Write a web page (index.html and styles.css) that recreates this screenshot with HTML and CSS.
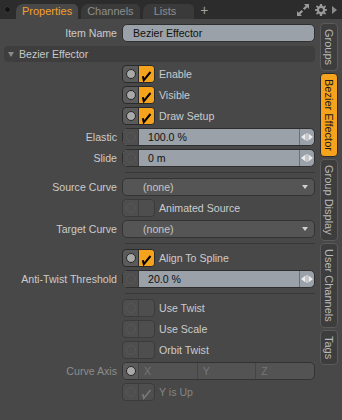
FILE: index.html
```html
<!DOCTYPE html>
<html lang="en">
<head>
    <meta charset="UTF-8">
    <meta name="viewport" content="width=device-width, initial-scale=1.0">
    <title>Bezier Effector Properties</title>
    <link rel="stylesheet" href="styles.css">
</head>
<body>
    <div class="topbar">
        <span class="dot"></span>
        <div class="tab active">Properties</div>
        <div class="tab">Channels</div>
        <div class="tab lists">Lists</div>
        <span class="plus">+</span>
        <div class="tools">
            <svg width="14" height="14" viewBox="0 0 14 14">
                <path d="M8 1 H13 V6 L11.3 4.3 L8.5 7.1 L6.9 5.5 L9.7 2.7 Z" fill="#9a9a9a"/>
                <path d="M6 13 H1 V8 L2.7 9.7 L5.5 6.9 L7.1 8.5 L4.3 11.3 Z" fill="#9a9a9a"/>
            </svg>
            <svg width="12" height="12" viewBox="0 0 12 12">
                <path d="M5 0 H7 L7.3 1.8 L8.6 2.4 L10.1 1.3 L11 2.8 L9.7 4.1 L10 5 L12 5.2 V6.8 L10 7 L9.7 7.9 L11 9.2 L10.1 10.7 L8.6 9.6 L7.3 10.2 L7 12 H5 L4.7 10.2 L3.4 9.6 L1.9 10.7 L1 9.2 L2.3 7.9 L2 7 L0 6.8 V5.2 L2 5 L2.3 4.1 L1 2.8 L1.9 1.3 L3.4 2.4 L4.7 1.8 Z M6 4 A2 2 0 1 0 6 8 A2 2 0 1 0 6 4 Z" fill="#9a9a9a" fill-rule="evenodd"/>
            </svg>
            <svg width="5" height="8" viewBox="0 0 5 8">
                <path d="M0 0 L5 4 L0 8 Z" fill="#8a8a8a"/>
            </svg>
        </div>
    </div>

    <div class="main">
        <div class="panel">
            <div class="row">
                <span class="label">Item Name</span>
                <div class="text-field">Bezier Effector</div>
            </div>

            <div class="section"><span class="caret"></span>Bezier Effector</div>

            <div class="row">
                <span class="label"></span>
                <div class="check-row">
                    <span class="toggle on"><span class="knob"><i></i></span><span class="box"><svg viewBox="0 0 16 16"><path d="M3.8 10.2 L4.8 14.2 L11.5 6"/></svg></span></span>
                    Enable
                </div>
            </div>
            <div class="row">
                <span class="label"></span>
                <div class="check-row">
                    <span class="toggle on"><span class="knob"><i></i></span><span class="box"><svg viewBox="0 0 16 16"><path d="M3.8 10.2 L4.8 14.2 L11.5 6"/></svg></span></span>
                    Visible
                </div>
            </div>
            <div class="row">
                <span class="label"></span>
                <div class="check-row">
                    <span class="toggle on"><span class="knob"><i></i></span><span class="box"><svg viewBox="0 0 16 16"><path d="M3.8 10.2 L4.8 14.2 L11.5 6"/></svg></span></span>
                    Draw Setup
                </div>
            </div>
            <div class="row">
                <span class="label">Elastic</span>
                <div class="num-field">
                    <span class="knob"><i></i></span>
                    <span class="value">100.0 %</span>
                    <span class="spin"><svg width="12" height="10" viewBox="0 0 12 10"><path d="M0 5 L4.5 1.5 V8.5 Z M7.5 1.5 L12 5 L7.5 8.5 Z" fill="#ececec"/><rect x="5.5" y="1" width="1" height="8" fill="#ececec"/></svg></span>
                </div>
            </div>
            <div class="row">
                <span class="label">Slide</span>
                <div class="num-field">
                    <span class="knob"><i></i></span>
                    <span class="value">0 m</span>
                    <span class="spin"><svg width="12" height="10" viewBox="0 0 12 10"><path d="M0 5 L4.5 1.5 V8.5 Z M7.5 1.5 L12 5 L7.5 8.5 Z" fill="#ececec"/><rect x="5.5" y="1" width="1" height="8" fill="#ececec"/></svg></span>
                </div>
            </div>

            <div class="sep"></div>

            <div class="row">
                <span class="label">Source Curve</span>
                <div class="dropdown">(none)<span class="arrow"></span></div>
            </div>
            <div class="row">
                <span class="label"></span>
                <div class="check-row">
                    <span class="toggle"><span class="knob"><i></i></span><span class="box"></span></span>
                    Animated Source
                </div>
            </div>
            <div class="row">
                <span class="label">Target Curve</span>
                <div class="dropdown">(none)<span class="arrow"></span></div>
            </div>

            <div class="sep"></div>

            <div class="row">
                <span class="label"></span>
                <div class="check-row">
                    <span class="toggle on"><span class="knob"><i></i></span><span class="box"><svg viewBox="0 0 16 16"><path d="M3.8 10.2 L4.8 14.2 L11.5 6"/></svg></span></span>
                    Align To Spline
                </div>
            </div>
            <div class="row">
                <span class="label">Anti-Twist Threshold</span>
                <div class="num-field">
                    <span class="knob"><i></i></span>
                    <span class="value">20.0 %</span>
                    <span class="spin"><svg width="12" height="10" viewBox="0 0 12 10"><path d="M0 5 L4.5 1.5 V8.5 Z M7.5 1.5 L12 5 L7.5 8.5 Z" fill="#ececec"/><rect x="5.5" y="1" width="1" height="8" fill="#ececec"/></svg></span>
                </div>
            </div>

            <div class="sep"></div>

            <div class="row">
                <span class="label"></span>
                <div class="check-row">
                    <span class="toggle"><span class="knob"><i></i></span><span class="box"></span></span>
                    Use Twist
                </div>
            </div>
            <div class="row">
                <span class="label"></span>
                <div class="check-row">
                    <span class="toggle"><span class="knob"><i></i></span><span class="box"></span></span>
                    Use Scale
                </div>
            </div>
            <div class="row">
                <span class="label"></span>
                <div class="check-row">
                    <span class="toggle"><span class="knob"><i></i></span><span class="box"></span></span>
                    Orbit Twist
                </div>
            </div>
            <div class="row">
                <span class="label dim">Curve Axis</span>
                <div class="axis">
                    <span class="knob lit"><i></i></span>
                    <span class="seg">X</span>
                    <span class="seg">Y</span>
                    <span class="seg">Z</span>
                </div>
            </div>
            <div class="row">
                <span class="label"></span>
                <div class="check-row dim">
                    <span class="toggle off"><span class="knob"><i></i></span><span class="box"><svg viewBox="0 0 16 16"><path d="M3.8 10.2 L4.8 14.2 L11.5 6"/></svg></span></span>
                    Y is Up
                </div>
            </div>
        </div>

        <div class="side">
            <div class="vtab">Groups</div>
            <div class="vtab active">Bezier Effector</div>
            <div class="vtab">Group Display</div>
            <div class="vtab">User Channels</div>
            <div class="vtab">Tags</div>
        </div>
    </div>
</body>
</html>
```

FILE: styles.css
```css
body {
    margin: 0;
    width: 342px;
    height: 420px;
    overflow: hidden;
    background: #484848;
    font-family: "Liberation Sans", Arial, sans-serif;
    font-size: 10.6px;
    color: #cbcbcb;
}

/* top tab strip */
.topbar {
    height: 19px;
    background: #2c2c2c;
    display: flex;
    align-items: flex-end;
    border-bottom: 1px solid #484848;
}
.dot {
    width: 5px;
    height: 5px;
    border-radius: 50%;
    background: #121212;
    border: 1px solid #3b3b3b;
    margin: 0 5px 0 4px;
    align-self: center;
}
.tab {
    height: 15px;
    line-height: 15px;
    padding: 0 6px;
    margin-right: 3px;
    background: #3a3a3a;
    color: #8e8e8e;
    border-radius: 7px 5px 0 0;
    font-size: 11px;
}
.tab.active {
    background: #484848;
    color: #f2a12a;
}
.tab.lists {
    padding: 0 18px 0 11px;
}
.plus {
    color: #a0a0a0;
    font-size: 14px;
    line-height: 17px;
    margin-left: 3px;
}
.tools {
    margin-left: auto;
    align-self: center;
    display: flex;
    align-items: center;
    gap: 5px;
    padding-right: 5px;
}

.main {
    display: flex;
}

/* properties form */
.panel {
    width: 311px;
    padding: 4px 3px 0 4px;
    display: flex;
    flex-direction: column;
    gap: 3px;
}
.row {
    display: grid;
    grid-template-columns: 113px 193px;
    column-gap: 5px;
    height: 18px;
    align-items: center;
}
.label {
    text-align: right;
    white-space: nowrap;
}
.label.dim {
    color: #8d8d8d;
}

.text-field {
    height: 18px;
    line-height: 16px;
    box-sizing: border-box;
    background: #9ba1a8;
    border: 1px solid #2f2f2f;
    border-radius: 5px;
    color: #111;
    padding-left: 10px;
}

.section {
    height: 16px;
    line-height: 16px;
    margin-top: 1px;
    background: #3e3e3e;
    border-radius: 4px;
    display: flex;
    align-items: center;
    color: #c8c8c8;
    padding-left: 4px;
}
.caret {
    width: 0;
    height: 0;
    border-left: 3.5px solid transparent;
    border-right: 3.5px solid transparent;
    border-top: 5px solid #8a8a8a;
    margin-right: 5px;
}

.check-row {
    display: flex;
    align-items: center;
    gap: 4px;
    white-space: nowrap;
}
.check-row.dim {
    color: #858585;
}
.toggle {
    display: flex;
    width: 33px;
    height: 18px;
    box-sizing: border-box;
    border: 1px solid #3b3b3b;
    border-radius: 4px;
    overflow: hidden;
    background: #4e4e4e;
}
.toggle .knob {
    width: 15px;
}
.toggle .box {
    flex: 1;
    border-left: 1px solid #3e3e3e;
}
.toggle .box svg {
    width: 16px;
    height: 16px;
    display: block;
}
.toggle .box path {
    fill: none;
    stroke: #000;
    stroke-width: 2;
    stroke-linejoin: miter;
}
.toggle.on {
    border-color: #2a2a2a;
    background: #5b5b5b;
}
.toggle.on .box {
    background: #f5a21c;
    border-left-color: #2a2a2a;
}
.toggle.off .box path {
    stroke: #7a7a7a;
    stroke-width: 1.6;
}

.knob {
    display: flex;
    align-items: center;
    justify-content: center;
    flex: none;
}
.knob i {
    width: 8px;
    height: 8px;
    border-radius: 50%;
    border: 1px solid #585858;
}
.toggle.on .knob i,
.knob.lit i {
    background: #a9a9a9;
    border-color: #262626;
}

.num-field {
    display: flex;
    height: 18px;
    box-sizing: border-box;
    border: 1px solid #2e2e2e;
    border-radius: 5px;
    overflow: hidden;
    background: #9ba1a8;
}
.num-field .knob {
    width: 15px;
    background: #4e4e4e;
    border-right: 1px solid #3a3a3a;
}
.num-field .value {
    flex: 1;
    color: #111;
    line-height: 16px;
    padding-left: 9px;
}
.spin {
    width: 14px;
    border-left: 1px solid #6c7075;
    display: flex;
    align-items: center;
    justify-content: center;
}

.sep {
    height: 2px;
    margin: 2px 0 0 121px;
    border-top: 1px solid #383838;
}

.dropdown {
    height: 18px;
    box-sizing: border-box;
    line-height: 16px;
    background: #555;
    border: 1px solid #333;
    border-radius: 5px;
    color: #c5c5c5;
    padding-left: 20px;
    display: flex;
    align-items: center;
}
.arrow {
    margin-left: auto;
    margin-right: 6px;
    width: 0;
    height: 0;
    border-left: 3.5px solid transparent;
    border-right: 3.5px solid transparent;
    border-top: 4px solid #d0d0d0;
}

.axis {
    display: flex;
    height: 18px;
    box-sizing: border-box;
    border: 1px solid #333;
    border-radius: 5px;
    overflow: hidden;
    background: #535353;
    color: #767676;
}
.axis .knob {
    width: 15px;
    background: #5a5a5a;
}
.seg {
    flex: 1;
    line-height: 16px;
    padding-left: 5px;
    border-left: 1px solid #444;
}

/* vertical tabs on the right */
.side {
    padding: 3px 0 0 2px;
    display: flex;
    flex-direction: column;
    gap: 2px;
}
.vtab {
    writing-mode: vertical-rl;
    width: 18px;
    box-sizing: border-box;
    padding: 5px 0;
    line-height: 16px;
    background: #3d3d3d;
    border: 1px solid #5a5a5a;
    border-radius: 4px;
    color: #b9b9b9;
    text-align: center;
    font-size: 11px;
}
.vtab.active {
    background: #f5a21c;
    border-color: #2a2a2a;
    color: #1a1a1a;
}
```
